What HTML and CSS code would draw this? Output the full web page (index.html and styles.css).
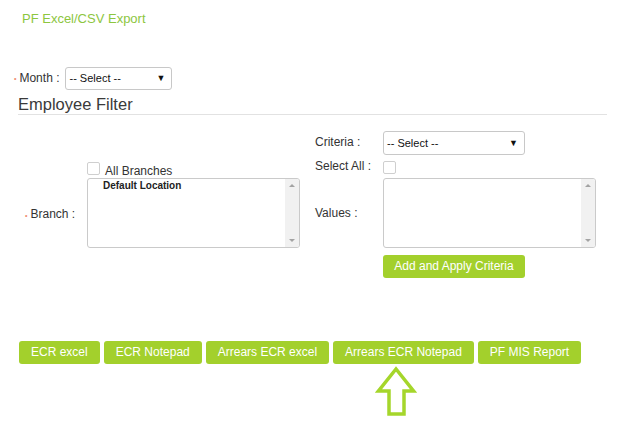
FILE: index.html
```html
<!DOCTYPE html>
<html>
<head>
<meta charset="utf-8">
<link rel="stylesheet" href="styles.css">
</head>
<body>
<div class="page">
  <h1 class="title">PF Excel/CSV Export</h1>

  <div class="month-row">
    <span class="req">•</span><span class="lbl">Month :</span>
    <div class="select sel-month"><span>-- Select --</span><span class="caret">▼</span></div>
  </div>

  <h2 class="section">Employee Filter</h2>

  <div class="filter">
    <div class="c-crit-l lbl">Criteria :</div>
    <div class="c-crit select sel-crit"><span>-- Select --</span><span class="caret">▼</span></div>

    <div class="c-allb"><span class="check"></span><span class="lbl allb-text">All Branches</span></div>
    <div class="c-sa-l lbl">Select All :</div>
    <div class="c-sa"><span class="check"></span></div>

    <div class="c-branch-l lbl"><span class="req">•</span>Branch :</div>
    <div class="c-branch listbox">
      <div class="list-items"><div class="item">Default Location</div></div>
      <div class="sbar"><span class="up"></span><span class="down"></span></div>
    </div>
    <div class="c-values-l lbl">Values :</div>
    <div class="c-values listbox">
      <div class="list-items"></div>
      <div class="sbar"><span class="up"></span><span class="down"></span></div>
    </div>

    <div class="c-apply"><button class="btn btn-apply">Add and Apply Criteria</button></div>
  </div>

  <div class="actions">
    <button class="btn">ECR excel</button>
    <button class="btn">ECR Notepad</button>
    <button class="btn">Arrears ECR excel</button>
    <button class="btn">Arrears ECR Notepad</button>
    <button class="btn">PF MIS Report</button>
  </div>
  <div class="pointer">
    <svg class="arrow" width="42" height="52" viewBox="0 0 42 52" xmlns="http://www.w3.org/2000/svg">
      <path d="M21 3 L3.5 25 L14 25 L14 48 L29 48 L29 25 L38.5 25 Z" fill="none" stroke="#a5d62b" stroke-width="3.5"/>
    </svg>
  </div>
</div>
</body>
</html>
```

FILE: styles.css
```css
html, body {
  margin: 0;
  padding: 0;
  background: #fff;
}
body {
  font-family: "Liberation Sans", Arial, sans-serif;
  color: #333;
  font-size: 12px;
}
.page {
  padding: 0 16px 0 18px;
}
.title {
  margin: 0;
  padding: 11px 0 0 4px;
  font-size: 13px;
  font-weight: normal;
  color: #8dc63f;
  line-height: 16px;
}
.month-row {
  display: flex;
  align-items: center;
  margin-top: 39px;
  margin-left: -4px;
  height: 24px;
}
.req {
  color: #f08a6c;
  font-size: 7px;
  margin-right: 3px;
}
.lbl {
  font-size: 12px;
  color: #333;
}
.select {
  box-sizing: border-box;
  border: 1px solid #c8c8c8;
  border-radius: 3px;
  background: #fff;
  display: flex;
  align-items: center;
  justify-content: space-between;
  padding: 0 6px 0 3px;
  font-size: 11px;
  color: #111;
}
.caret {
  font-size: 9px;
  color: #111;
}
.sel-month {
  width: 107px;
  height: 23px;
  margin-left: 6px;
}
.section {
  margin: 4px 1px 0 0;
  font-size: 16.5px;
  font-weight: normal;
  color: #3a3a3a;
  line-height: 20px;
  padding-bottom: 0;
  border-bottom: 1px solid #e2e2e2;
}
.filter {
  display: grid;
  grid-template-columns: 69px 213px 15px 68px 213px;
  grid-template-rows: 24px 23px 70px 31px;
  margin-top: 16px;
}
.c-crit-l { grid-column: 4; grid-row: 1; align-self: center; margin-top: -2px; }
.c-crit { grid-column: 5; grid-row: 1; width: 142px; height: 24px; }
.c-allb { grid-column: 2; grid-row: 2; display: flex; align-items: flex-start; padding-top: 7px; }
.allb-text { margin-left: 5px; margin-top: 2px; }
.c-sa-l { grid-column: 4; grid-row: 2; padding-top: 4px; }
.c-sa { grid-column: 5; grid-row: 2; padding-top: 6px; }
.c-branch-l { grid-column: 1; grid-row: 3; align-self: center; padding-left: 7px; margin-top: 2px; }
.c-branch { grid-column: 2; grid-row: 3; }
.c-values-l { grid-column: 4; grid-row: 3; align-self: center; }
.c-values { grid-column: 5; grid-row: 3; }
.c-apply { grid-column: 5; grid-row: 4; padding-top: 7px; }

.check {
  display: inline-block;
  box-sizing: border-box;
  width: 13px;
  height: 13px;
  border: 1px solid #cfcfcf;
  border-radius: 2px;
  background: #fff;
}
.listbox {
  box-sizing: border-box;
  border: 1px solid #cacaca;
  border-radius: 3px;
  display: flex;
  overflow: hidden;
  background: #fff;
}
.list-items {
  flex: 1;
  padding: 1px 0 0 15px;
}
.item {
  font-size: 10px;
  font-weight: bold;
  color: #222;
  line-height: 12px;
}
.sbar {
  width: 14px;
  background: #f1f1f1;
  position: relative;
}
.sbar .up, .sbar .down {
  position: absolute;
  left: 4px;
  width: 0;
  height: 0;
  border-left: 3px solid transparent;
  border-right: 3px solid transparent;
}
.sbar .up {
  top: 5px;
  border-bottom: 3px solid #a3a3a3;
}
.sbar .down {
  bottom: 5px;
  border-top: 3px solid #a3a3a3;
}
.btn {
  font-family: "Liberation Sans", Arial, sans-serif;
  font-size: 12px;
  color: #fff;
  background: #a3d02c;
  border: none;
  border-radius: 3px;
  height: 23px;
  padding: 0 12px;
  line-height: 23px;
  white-space: nowrap;
  flex: none;
  cursor: pointer;
}
.btn-apply {
  width: 142px;
  padding: 0;
}
.actions {
  display: flex;
  align-items: flex-start;
  gap: 4px;
  margin-top: 62px;
  margin-left: 1px;
}
.pointer {
  display: block;
  margin-top: 2px;
  padding-left: 357px;
  height: 52px;
}
.arrow {
  display: block;
}
```
